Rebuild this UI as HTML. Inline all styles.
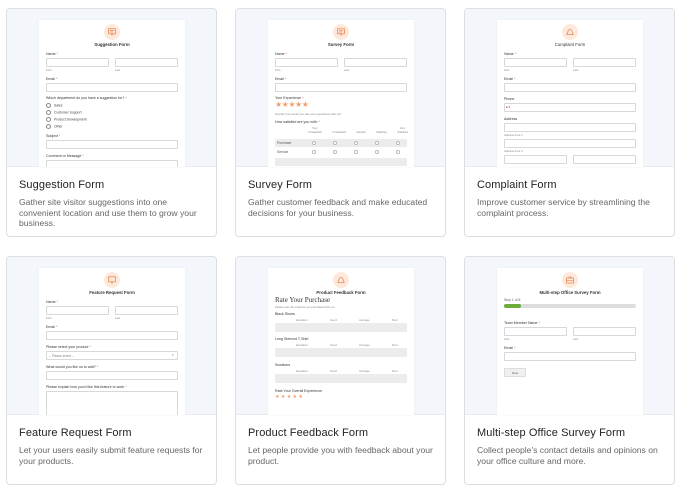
<!DOCTYPE html>
<html><head><meta charset="utf-8"><style>
*{margin:0;padding:0;box-sizing:border-box}
body{width:680px;height:487px;background:#fff;font-family:"Liberation Sans",sans-serif;position:relative;overflow:hidden}
.card{position:absolute;width:211px;height:229px;border:1px solid #dcdee2;border-radius:4px;overflow:hidden;background:#fff}
.pv{position:absolute;left:0;top:0;width:100%;height:158px;background:#f3f6fb;border-bottom:1px solid #e8eaee}
.f{position:absolute;left:32px;top:11px;width:146px;height:147px;background:#fff;box-shadow:0 0 1px #e3e5e8;overflow:hidden}
.f *{position:absolute}
.ic{left:65px;top:4px;width:16px;height:16px;border-radius:50%;background:#fde9dc}
.ic svg{left:4px;top:4px}
.t{left:0;width:146px;text-align:center;font-size:4.3px;font-weight:bold;color:#333}
.l{font-size:3.6px;color:#333;left:7px;white-space:nowrap}
.l b{position:static;color:#e05a4f;font-weight:normal}
.s{font-size:2.8px;color:#888;white-space:nowrap}
.i{height:9px;border:1px solid #d6d8dc;border-radius:1px;background:#fff}
.h1{left:7px;width:63px}.h2{left:76px;width:63px}.w{left:7px;width:132px}
.r{left:7px;font-size:3.4px;color:#444;white-space:nowrap}
.r::before{content:"";display:inline-block;width:3px;height:3px;border:0.5px solid #888;border-radius:50%;margin-right:3px;vertical-align:middle}
.row{left:7px;width:132px;height:8px;background:#ececec;border-radius:1px}
.dot{width:3.5px;height:3.5px;border-radius:50%;background:#fff;border:0.5px solid #bbb}
h3{position:absolute;left:12px;top:170px;font-size:11px;font-weight:normal;color:#222;letter-spacing:.1px}
p{position:absolute;left:12px;top:188px;width:192px;font-size:8.6px;line-height:10.6px;color:#666}
</style></head><body>

<!-- Card 1 -->
<div class="card" style="left:6px;top:8px">
<div class="pv"><div class="f">
<div class="ic"><svg width="8" height="8" viewBox="0 0 8 8"><rect x="0.5" y="0.8" width="7" height="5" fill="none" stroke="#e88a55" stroke-width=".8"/><path d="M2 2.6h4M2 4h3M3 5.8L4 7.3 5 5.8" stroke="#e88a55" stroke-width=".7" fill="none"/></svg></div>
<div class="t" style="top:22px">Suggestion Form</div>
<div class="l" style="top:32px">Name <b>*</b></div>
<div class="i h1" style="top:38px"></div><div class="i h2" style="top:38px"></div>
<div class="s" style="left:7px;top:48px">First</div><div class="s" style="left:76px;top:48px">Last</div>
<div class="l" style="top:57px">Email <b>*</b></div>
<div class="i w" style="top:63px"></div>
<div class="l" style="top:76px">Which department do you have a suggestion for? <b>*</b></div>
<div class="r" style="top:83px">Sales</div>
<div class="r" style="top:90px">Customer Support</div>
<div class="r" style="top:97px">Product Development</div>
<div class="r" style="top:104px">Other</div>
<div class="l" style="top:114px">Subject <b>*</b></div>
<div class="i w" style="top:120px"></div>
<div class="l" style="top:134px">Comment or Message <b>*</b></div>
<div class="i w" style="top:140px;height:20px"></div>
</div></div>
<h3>Suggestion Form</h3>
<p>Gather site visitor suggestions into one convenient location and use them to grow your business.</p>
</div>

<!-- Card 2 -->
<div class="card" style="left:235px;top:8px">
<div class="pv"><div class="f">
<div class="ic"><svg width="8" height="8" viewBox="0 0 8 8"><rect x="0.5" y="0.8" width="7" height="5" fill="none" stroke="#e88a55" stroke-width=".8"/><path d="M2 2.6h4M2 4h3M3 5.8L4 7.3 5 5.8" stroke="#e88a55" stroke-width=".7" fill="none"/></svg></div>
<div class="t" style="top:22px">Survey Form</div>
<div class="l" style="top:32px">Name <b>*</b></div>
<div class="i h1" style="top:38px"></div><div class="i h2" style="top:38px"></div>
<div class="s" style="left:7px;top:48px">First</div><div class="s" style="left:76px;top:48px">Last</div>
<div class="l" style="top:57px">Email <b>*</b></div>
<div class="i w" style="top:63px"></div>
<div class="l" style="top:76px">Your Experience <b>*</b></div>
<div style="left:7px;top:80px;font-size:8px;color:#f0a070;letter-spacing:-0.5px">★★★★★</div>
<div class="s" style="left:7px;top:92px">Overall, how would you rate your experience with us?</div>
<div class="l" style="top:100px">How satisfied are you with: <b>*</b></div>
<div class="s" style="left:40px;top:106px;width:100px;display:flex;justify-content:space-between;text-align:center;position:absolute"><span style="position:static">Very<br>Unsatisfied</span><span style="position:static"><br>Unsatisfied</span><span style="position:static"><br>Neutral</span><span style="position:static"><br>Satisfied</span><span style="position:static">Very<br>Satisfied</span></div>
<div class="row" style="top:119px"></div>
<div class="s" style="left:9px;top:120.5px;font-size:3.4px;color:#555">Purchase</div>
<div class="s" style="left:9px;top:130px;font-size:3.4px;color:#555">Service</div>
<div class="row" style="top:138px"></div>
<div class="dot" style="left:44px;top:121px"></div><div class="dot" style="left:65px;top:121px"></div><div class="dot" style="left:86px;top:121px"></div><div class="dot" style="left:107px;top:121px"></div><div class="dot" style="left:128px;top:121px"></div>
<div class="dot" style="left:44px;top:130px"></div><div class="dot" style="left:65px;top:130px"></div><div class="dot" style="left:86px;top:130px"></div><div class="dot" style="left:107px;top:130px"></div><div class="dot" style="left:128px;top:130px"></div>
</div></div>
<h3>Survey Form</h3>
<p>Gather customer feedback and make educated decisions for your business.</p>
</div>

<!-- Card 3 -->
<div class="card" style="left:464px;top:8px">
<div class="pv"><div class="f">
<div class="ic"><svg width="8" height="8" viewBox="0 0 8 8"><path d="M0.8 6.5h6.4L6 3.5A2 2 0 0 0 2 3.5z" fill="none" stroke="#e88a55" stroke-width=".8"/></svg></div>
<div class="t" style="top:22px;font-weight:normal">Complaint Form</div>
<div class="l" style="top:32px">Name <b>*</b></div>
<div class="i h1" style="top:38px"></div><div class="i h2" style="top:38px"></div>
<div class="s" style="left:7px;top:48px">First</div><div class="s" style="left:76px;top:48px">Last</div>
<div class="l" style="top:57px">Email <b>*</b></div>
<div class="i w" style="top:63px"></div>
<div class="l" style="top:77px">Phone</div>
<div class="i w" style="top:83px"></div>
<div class="s" style="left:9px;top:85px;color:#c44">■ <span style="position:static;color:#555">▾</span></div>
<div class="l" style="top:97px">Address</div>
<div class="i w" style="top:103px"></div>
<div class="s" style="left:7px;top:113px">Address Line 1</div>
<div class="i w" style="top:119px"></div>
<div class="s" style="left:7px;top:129px">Address Line 2</div>
<div class="i h1" style="top:135px"></div><div class="i h2" style="top:135px"></div>
</div></div>
<h3>Complaint Form</h3>
<p>Improve customer service by streamlining the complaint process.</p>
</div>

<!-- Card 4 -->
<div class="card" style="left:6px;top:256px">
<div class="pv"><div class="f">
<div class="ic"><svg width="8" height="8" viewBox="0 0 8 8"><rect x="0.5" y="0.8" width="7" height="5" fill="none" stroke="#e88a55" stroke-width=".8"/><path d="M3 5.8L4 7.3 5 5.8" stroke="#e88a55" stroke-width=".7" fill="none"/></svg></div>
<div class="t" style="top:22px">Feature Request Form</div>
<div class="l" style="top:32px">Name <b>*</b></div>
<div class="i h1" style="top:38px"></div><div class="i h2" style="top:38px"></div>
<div class="s" style="left:7px;top:48px">First</div><div class="s" style="left:76px;top:48px">Last</div>
<div class="l" style="top:57px">Email <b>*</b></div>
<div class="i w" style="top:63px"></div>
<div class="l" style="top:77px">Please select your product <b>*</b></div>
<div class="i w" style="top:83px"></div>
<div class="s" style="left:10px;top:85.5px;font-size:3.2px">-- Please select --</div>
<div class="s" style="left:133px;top:85px">▾</div>
<div class="l" style="top:97px">What would you like us to add? <b>*</b></div>
<div class="i w" style="top:103px"></div>
<div class="l" style="top:117px">Please explain how you'd like this feature to work <b>*</b></div>
<div class="i w" style="top:123px;height:30px"></div>
</div></div>
<h3>Feature Request Form</h3>
<p>Let your users easily submit feature requests for your products.</p>
</div>

<!-- Card 5 -->
<div class="card" style="left:235px;top:256px">
<div class="pv"><div class="f">
<div class="ic"><svg width="8" height="8" viewBox="0 0 8 8"><path d="M0.8 6.5h6.4L6 3.5A2 2 0 0 0 2 3.5z" fill="none" stroke="#e88a55" stroke-width=".8"/></svg></div>
<div class="t" style="top:22px">Product Feedback Form</div>
<div style="left:7px;top:28px;font-family:'Liberation Serif',serif;font-size:7px;color:#333">Rate Your Purchase</div>
<div class="s" style="left:7px;top:37px">Please rate the products you purchased from us.</div>
<div class="l" style="top:44px">Black Shoes</div>
<div class="s" style="left:17px;top:50px;width:124px;display:flex;justify-content:space-around"><span style="position:static">Excellent</span><span style="position:static">Good</span><span style="position:static">Average</span><span style="position:static">Poor</span></div>
<div class="row" style="top:55px;height:9px"></div>
<div class="l" style="top:69px">Long Sleeved T-Shirt</div>
<div class="s" style="left:17px;top:75px;width:124px;display:flex;justify-content:space-around"><span style="position:static">Excellent</span><span style="position:static">Good</span><span style="position:static">Average</span><span style="position:static">Poor</span></div>
<div class="row" style="top:80px;height:9px"></div>
<div class="l" style="top:95px">Sneakers</div>
<div class="s" style="left:17px;top:101px;width:124px;display:flex;justify-content:space-around"><span style="position:static">Excellent</span><span style="position:static">Good</span><span style="position:static">Average</span><span style="position:static">Poor</span></div>
<div class="row" style="top:106px;height:9px"></div>
<div class="l" style="top:121px">Rate Your Overall Experience</div>
<div style="left:7px;top:126px;font-size:5px;color:#f0a070">★ ★ ★ ★ ★</div>
</div></div>
<h3>Product Feedback Form</h3>
<p>Let people provide you with feedback about your product.</p>
</div>

<!-- Card 6 -->
<div class="card" style="left:464px;top:256px">
<div class="pv"><div class="f">
<div class="ic"><svg width="8" height="8" viewBox="0 0 8 8"><rect x="0.6" y="2" width="6.8" height="5" fill="none" stroke="#e88a55" stroke-width=".8"/><path d="M3 2V1h2v1M0.6 4.3h6.8" stroke="#e88a55" stroke-width=".7" fill="none"/></svg></div>
<div class="t" style="top:22px">Multi-step Office Survey Form</div>
<div class="s" style="left:7px;top:30px;font-size:3.4px;color:#666">Step 1 of 8</div>
<div style="left:7px;top:36px;width:132px;height:4px;border-radius:2px;background:#ddd"></div>
<div style="left:7px;top:36px;width:17px;height:4px;border-radius:2px;background:#6aad3a"></div>
<div class="l" style="top:53px">Team Member Name <b>*</b></div>
<div class="i h1" style="top:59px"></div><div class="i h2" style="top:59px"></div>
<div class="s" style="left:7px;top:69px">First</div><div class="s" style="left:76px;top:69px">Last</div>
<div class="l" style="top:78px">Email <b>*</b></div>
<div class="i w" style="top:84px"></div>
<div style="left:7px;top:100px;width:22px;height:9px;background:#f0f0f0;border:0.5px solid #ddd;font-size:3px;color:#555;text-align:center;line-height:8px">Next</div>
</div></div>
<h3>Multi-step Office Survey Form</h3>
<p>Collect people's contact details and opinions on your office culture and more.</p>
</div>

</body></html>
